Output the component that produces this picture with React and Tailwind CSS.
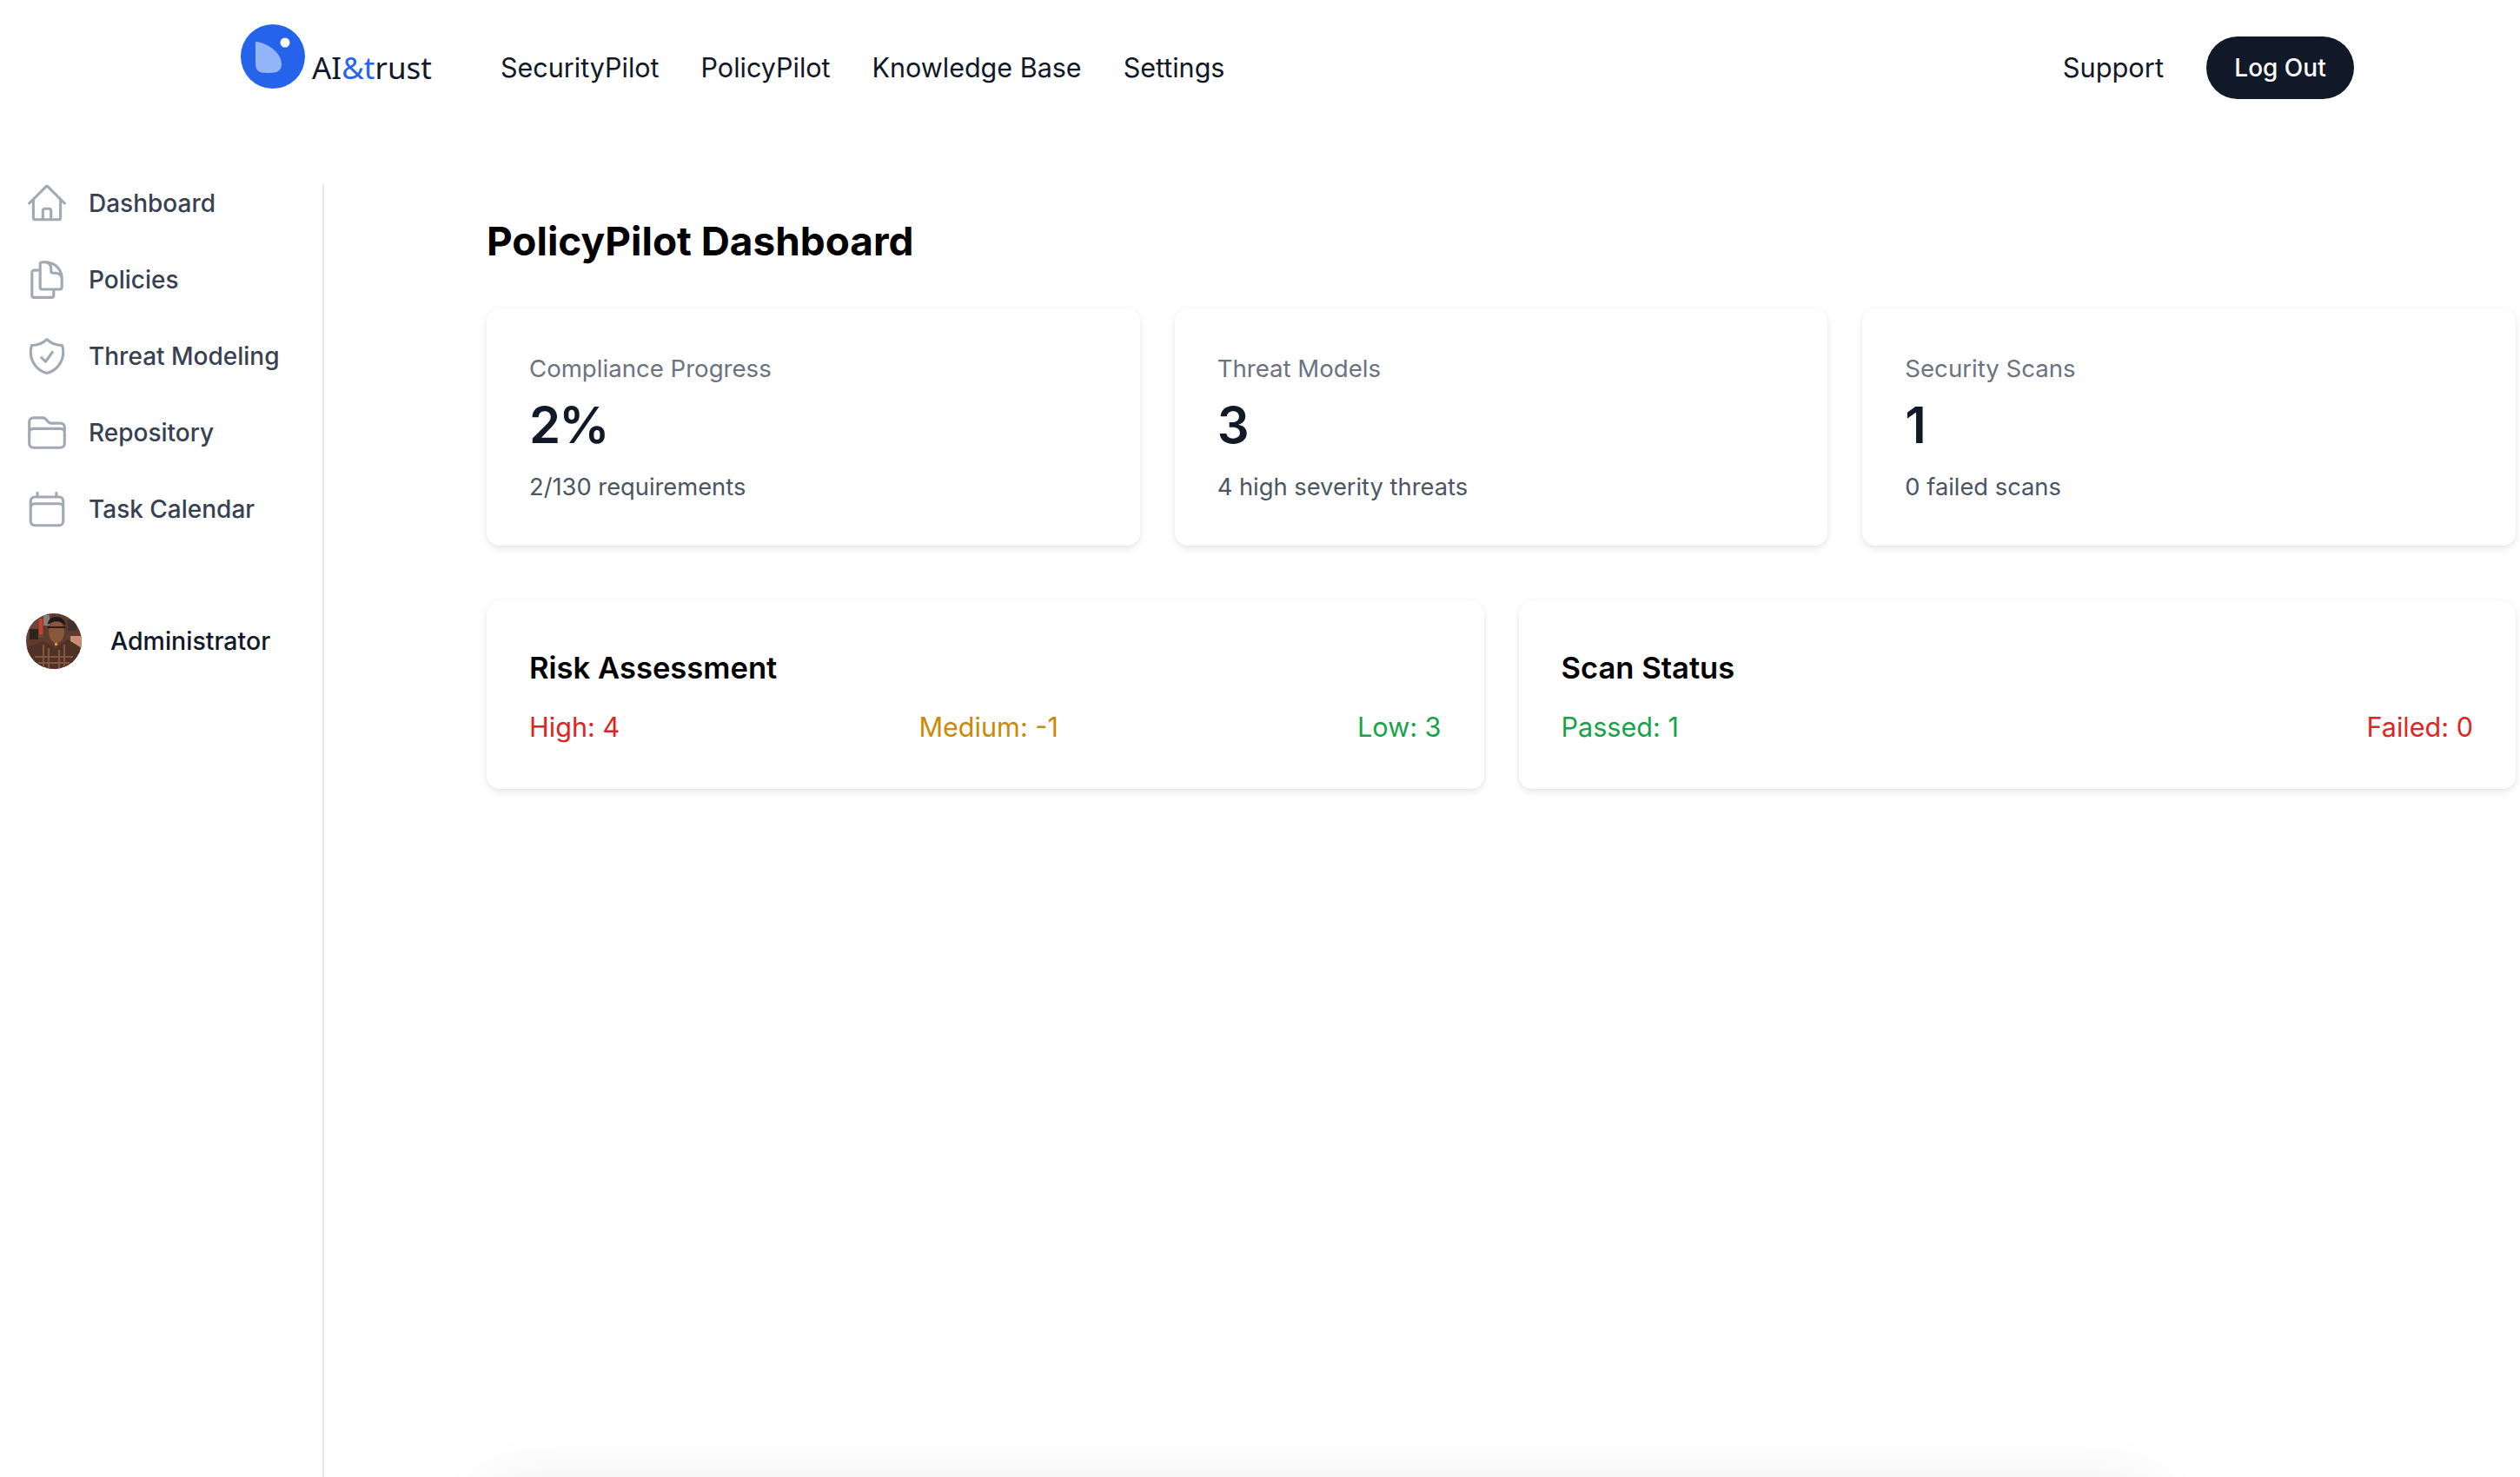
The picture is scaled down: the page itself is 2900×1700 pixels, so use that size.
import {
  HiOutlineHome,
  HiOutlineDocumentDuplicate,
  HiOutlineShieldCheck,
  HiOutlineFolder,
  HiOutlineCalendar,
} from 'react-icons/hi2';

const navLinks = ['SecurityPilot', 'PolicyPilot', 'Knowledge Base', 'Settings'];

const sideLinks = [
  { label: 'Dashboard', icon: HiOutlineHome },
  { label: 'Policies', icon: HiOutlineDocumentDuplicate },
  { label: 'Threat Modeling', icon: HiOutlineShieldCheck },
  { label: 'Repository', icon: HiOutlineFolder },
  { label: 'Task Calendar', icon: HiOutlineCalendar },
];

const stats = [
  { title: 'Compliance Progress', value: '2%', note: '2/130 requirements' },
  { title: 'Threat Models', value: '3', note: '4 high severity threats' },
  { title: 'Security Scans', value: '1', note: '0 failed scans' },
];

const cardClass = 'bg-white rounded-[15px] shadow-[0_4px_9px_-1px_rgba(0,0,0,0.10),0_0_6px_rgba(0,0,0,0.035)]';

const Logo = () => (
  <svg viewBox="0 0 74 74" className="w-[74px] h-[74px] shrink-0">
    <circle cx="37" cy="37" r="37" fill="#2563eb" />
    <path d="M17 20 C30 21 47 32 47 46 C47 55 40 56 30 56 C20 56 17 53 17 44 Z" fill="#93b4f8" />
    <circle cx="51" cy="21" r="5.5" fill="#fff" />
  </svg>
);

const Avatar = () => (
  <svg viewBox="0 0 64 64" className="w-[64px] h-[64px] shrink-0 rounded-full">
    <rect width="64" height="64" fill="#5f3b2d" />
    <rect x="0" y="6" width="20" height="22" fill="#6e4434" />
    <rect x="15" y="6" width="4" height="18" fill="#c9402f" />
    <rect x="20" y="2" width="7" height="12" fill="#8d7c78" />
    <rect x="4" y="18" width="10" height="12" fill="#2f2320" />
    <rect x="51" y="26" width="13" height="14" fill="#c98f74" />
    <rect x="48" y="8" width="10" height="12" fill="#3d3432" />
    <path d="M0 64 V40 L20 32 L34 40 L48 30 L64 40 V64 Z" fill="#4f3126" />
    <path d="M20 36 V64 M26 40 V64 M38 42 V64 M44 36 V64 M10 50 H54 M14 57 H50" stroke="#85563f" strokeWidth="2" />
    <ellipse cx="35" cy="21" rx="9" ry="13" fill="#8a573d" />
    <path d="M25 13 C25 1 46 1 45 14 C40 8 31 8 25 13 Z" fill="#1e1a1c" />
    <path d="M25 16 H45" stroke="#2a2022" strokeWidth="2" />
    <rect x="33" y="34" width="3" height="3" fill="#d9a520" />
  </svg>
);

const App = () => {
  return (
    <div className="relative w-[2900px] h-[1700px] overflow-hidden bg-white flex flex-col font-['Inter',sans-serif]">
      <header className="h-[156px] shrink-0 flex items-center pl-[277px] pr-[191px]">
        <div className="flex items-start gap-[8px] mr-[79px]">
          <div className="-mt-[25px]">
            <Logo />
          </div>
          <span className="font-['Noto_Sans',sans-serif] text-[35px] leading-[50px] text-[#111827]">
            AI<span className="text-[#2563eb]">&amp;t</span>rust
          </span>
        </div>
        <nav className="flex items-center gap-[48px]">
          {navLinks.map((link) => (
            <a key={link} className="text-[30.5px] text-[#111827]">{link}</a>
          ))}
        </nav>
        <div className="ml-auto flex items-center gap-[49px]">
          <a className="text-[30.8px] text-[#111827]">Support</a>
          <button className="w-[170px] h-[72px] rounded-full bg-[#111827] text-white text-[28px] font-medium">
            Log Out
          </button>
        </div>
      </header>

      <div className="flex flex-1 min-h-0">
        <aside className="w-[373px] shrink-0 mt-[56px] border-r-2 border-[#e5e7eb] pl-[29px]">
          <ul className="flex flex-col">
            {sideLinks.map(({ label, icon: Icon }) => (
              <li key={label} className="h-[88px] flex items-center gap-[23px] text-[28px] font-medium text-[#374151] first:-mt-[22px]">
                <Icon className="w-[50px] h-[50px] text-[#a3a9b3]" />
                {label}
              </li>
            ))}
          </ul>
          <div className="flex items-center gap-[33px] pl-[1px] mt-[76px]">
            <Avatar />
            <span className="text-[28.5px] font-medium text-[#111827]">Administrator</span>
          </div>
        </aside>

        <main className="flex-1 pl-[187px] pt-[97px]">
          <h1 className="text-[45.9px] leading-[50px] font-bold text-black">PolicyPilot Dashboard</h1>
          <div className="w-[2335px] mt-[52px] grid grid-cols-3 gap-[40px]">
            {stats.map((s) => (
              <div key={s.title} className={`${cardClass} h-[273px] pl-[49px] pt-[51px]`}>
                <p className="text-[27.6px] leading-[37px] text-[#6b7280]">{s.title}</p>
                <p className="text-[58px] leading-[67px] mt-[13px] font-semibold tracking-[-2px] text-[#111827]">{s.value}</p>
                <p className="text-[27.3px] leading-[37px] mt-[19px] text-[#4b5563]">{s.note}</p>
              </div>
            ))}
          </div>
          <div className="w-[2335px] mt-[64px] grid grid-cols-2 gap-[40px]">
            <div className={`${cardClass} h-[216px] px-[49px] pt-[53px]`}>
              <h2 className="text-[34.6px] leading-[46px] font-semibold text-black">Risk Assessment</h2>
              <div className="flex justify-between mt-[24px] text-[30.6px] leading-[44px]">
                <span className="text-[#dc2626]">High: 4</span>
                <span className="text-[#ca8a04]">Medium: -1</span>
                <span className="text-[#16a34a]">Low: 3</span>
              </div>
            </div>
            <div className={`${cardClass} h-[216px] px-[49px] pt-[53px]`}>
              <h2 className="text-[34.6px] leading-[46px] font-semibold text-black">Scan Status</h2>
              <div className="flex justify-between mt-[24px] text-[30.6px] leading-[44px]">
                <span className="text-[#16a34a]">Passed: 1</span>
                <span className="text-[#dc2626]">Failed: 0</span>
              </div>
            </div>
          </div>
        </main>
      </div>
      {/* next panel sits just below the fold, only its shadow shows */}
      <div className="absolute left-[560px] top-[1712px] w-[1920px] h-[100px] rounded-[24px] bg-white shadow-[0_0_70px_rgba(0,0,0,0.09)]" />
    </div>
  );
};

export default App;
